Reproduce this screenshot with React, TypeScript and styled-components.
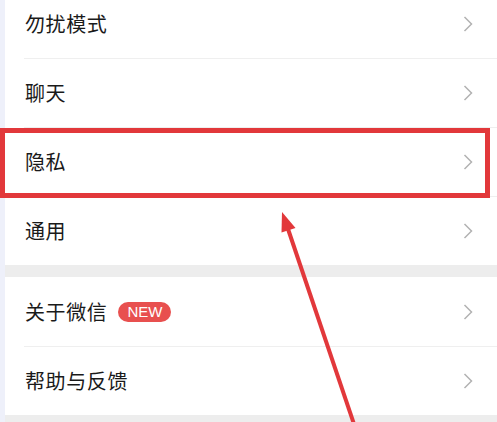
import styled, { createGlobalStyle } from 'styled-components'

type TItem = {
	label: string
	badge?: string
}

const groups: TItem[][] = [
	[{ label: '勿扰模式' }, { label: '聊天' }, { label: '隐私' }, { label: '通用' }],
	[{ label: '关于微信', badge: 'NEW' }, { label: '帮助与反馈' }],
]

const Chevron = () => (
	<svg width='10' height='16' viewBox='0 0 10 16'>
		<path d='M1.5 1 L8.5 8 L1.5 15' fill='none' stroke='#b2b2b2' strokeWidth='1.5' />
	</svg>
)

const App = () => {
	return (
		<>
			<GlobalStyle />
			<Page>
				<Panel>
					{groups.map((group, gi) => (
						<Group key={gi}>
							{group.map(item => (
								<Row key={item.label}>
									<Label>
										{item.label}
										{item.badge && <Badge>{item.badge}</Badge>}
									</Label>
									<Chevron />
								</Row>
							))}
						</Group>
					))}
				</Panel>

				{/* разметка поверх скриншота: рамка и стрелка */}
				<Highlight />
				<Arrow width='497' height='422' viewBox='0 0 497 422'>
					<line x1='287' y1='226' x2='356' y2='430' stroke='#e2383b' strokeWidth='4' />
					<polygon points='282,212 295.5,228 281.5,232.5' fill='#e2383b' />
				</Arrow>
			</Page>
		</>
	)
}

export default App

const GlobalStyle = createGlobalStyle`
	html, body {
		margin: 0;
		padding: 0;
		background: #eef0fa;
		overflow: hidden;
	}
`

const Page = styled.div`
	position: relative;
	width: 497px;
	height: 422px;
	overflow: hidden;
	padding-left: 5px;
	box-sizing: border-box;
	font-family: 'Noto Sans CJK SC', 'Noto Sans', sans-serif;
`

const Panel = styled.div`
	margin-top: -11px;
	background: #ededed;
	display: flex;
	flex-direction: column;
	gap: 12px;
	padding-bottom: 20px;
`

const Group = styled.div`
	background: #fff;
	display: flex;
	flex-direction: column;
`

const Row = styled.div`
	position: relative;
	height: 69px;
	box-sizing: border-box;
	display: flex;
	align-items: center;
	justify-content: space-between;
	padding: 0 24px 0 20px;

	& + &::before {
		content: '';
		position: absolute;
		top: 0;
		left: 19px;
		right: 0;
		height: 1px;
		background: #efefef;
	}
`

const Label = styled.div`
	display: flex;
	align-items: center;
	gap: 11px;
	font-size: 20px;
	color: #1a1a1a;
	letter-spacing: 0.6px;
`

const Badge = styled.span`
	background: #e8504f;
	color: #fff;
	font-family: 'Liberation Sans', Arial, sans-serif;
	font-size: 15px;
	line-height: 20px;
	padding: 0 9px;
	border-radius: 10px;
	letter-spacing: 0;
`

const Highlight = styled.div`
	position: absolute;
	left: 0;
	top: 128px;
	width: 490px;
	height: 70px;
	box-sizing: border-box;
	border: 5px solid #e2383b;
	pointer-events: none;
`

const Arrow = styled.svg`
	position: absolute;
	left: 0;
	top: 0;
	pointer-events: none;
`
